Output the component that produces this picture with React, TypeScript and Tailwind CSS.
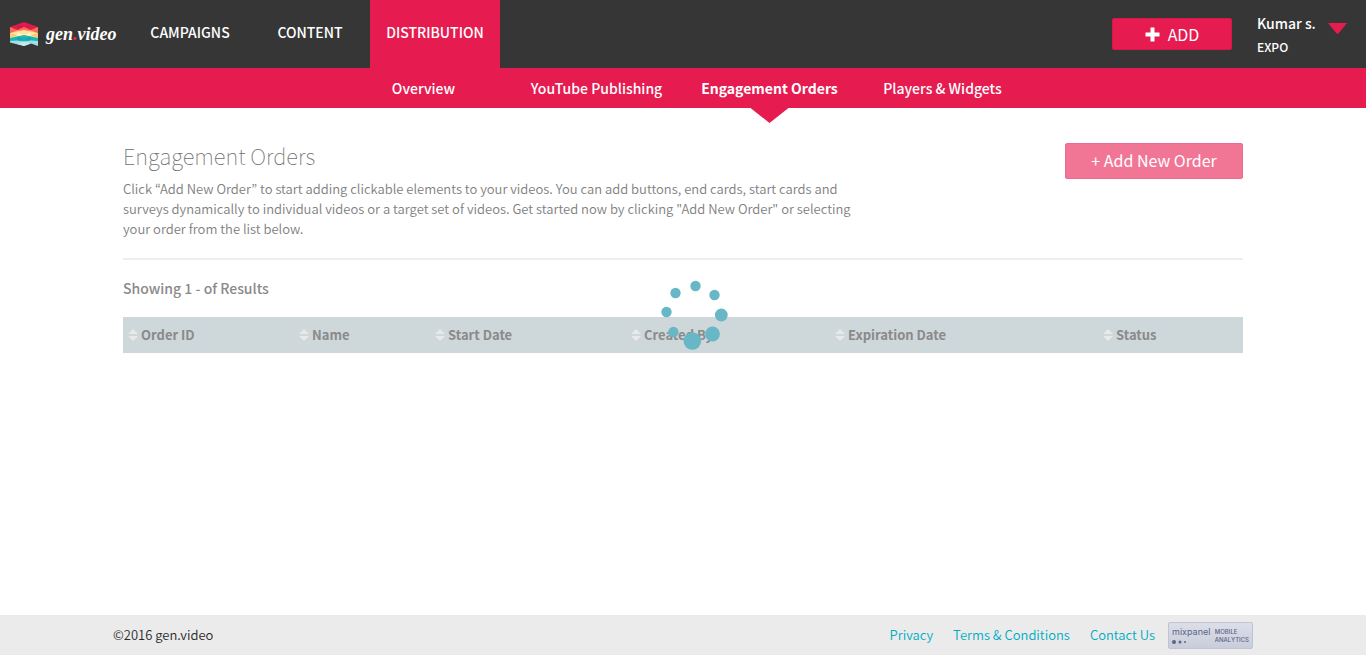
import React from "react";

const logoFacets: [string, string][] = [
  ["14,0 28,5 28,10 14,6 0,10 0,5", "#e6194d"],
  ["0,5 7,8 0,10.5", "#fb6f5c"],
  ["28,5 21,8 28,10.5", "#fb6f5c"],
  ["7,2.5 14,5 7,8", "#c91d4d"],
  ["21,2.5 14,5 21,8", "#d81b4d"],
  ["14,5 21,8 28,10.5 28,12 14,9 0,12 0,10.5 7,8", "#fb6f5c"],
  ["7,8 14,10 0,11", "#fca066"],
  ["21,8 14,10 28,11", "#fca066"],
  ["14,8 28,11 28,17 14,14 0,17 0,11", "#fde39a"],
  ["7,10 14,13 7,15.5", "#fff3c4"],
  ["21,10 14,13 21,15.5", "#fff3c4"],
  ["0,11 7,13.5 0,16", "#fdc878"],
  ["28,11 21,13.5 28,16", "#fdc878"],
  ["14,13 28,16 28,20 14,20 0,20 0,16", "#14b8b4"],
  ["7,14.5 14,17 7,20", "#1e9fb4"],
  ["21,14.5 14,17 21,20", "#1e9fb4"],
  ["0,19 7,18.5 14,19.5 21,18.5 28,19 28,24 21,21.5 14,24 0,20.5", "#a3dde6"],
  ["14,19.5 21,21.5 14,24 7,22", "#c3e9ee"],
];

function Logo() {
  return (
    <a href="#" className="flex w-[130px] items-center gap-2 pl-[10px] text-white">
      <svg width="28" height="24" viewBox="0 0 28 24" aria-hidden="true">
        {logoFacets.map(([points, fill]) => (
          <polygon key={points} points={points} fill={fill} />
        ))}
      </svg>
      <span className="font-['Liberation_Serif',serif] text-[18px] leading-6 font-bold italic">
        gen<span className="text-[#ff1f4f]">.</span>video
      </span>
    </a>
  );
}

const subNav = ["Overview", "YouTube Publishing", "Engagement Orders", "Players & Widgets"];

const columns = [
  { label: "Order ID", width: "w-[171px]" },
  { label: "Name", width: "w-[136px]" },
  { label: "Start Date", width: "w-[196px]" },
  { label: "Created By", width: "w-[204px]" },
  { label: "Expiration Date", width: "w-[268px]" },
  { label: "Status", width: "w-[145px]" },
];

const spinnerDots = [
  { x: 35.5, y: 6, r: 5.2 },
  { x: 54.5, y: 15, r: 5.2 },
  { x: 61.3, y: 35, r: 6.4 },
  { x: 52.5, y: 54, r: 7.4 },
  { x: 32.3, y: 61, r: 8.8 },
  { x: 13.4, y: 52, r: 5.2 },
  { x: 6.5, y: 32, r: 5.2 },
  { x: 15.5, y: 13, r: 5.2 },
];

export default function App() {
  return (
    <div className="flex min-h-screen flex-col bg-white font-['Noto_Sans_CJK_KR','Open_Sans',sans-serif] text-[#8a8a8a]">
      <header>
        <div className="flex h-[68px] items-stretch bg-[#363636]">
          <Logo />
          <nav className="flex text-[14px] leading-6 font-medium text-white">
            <a href="#" className="flex w-[120px] items-center justify-center pb-1">CAMPAIGNS</a>
            <a href="#" className="flex w-[120px] items-center justify-center pb-1">CONTENT</a>
            <a href="#" className="flex w-[130px] items-center justify-center bg-[#e61b4f] pb-1">DISTRIBUTION</a>
          </nav>
          <div className="ml-auto flex items-center pr-[19px]">
            <button className="flex h-8 w-[120px] items-center justify-center gap-2 rounded-xs border border-[#d9164a] bg-[#e61b4f] text-base leading-6 text-white">
              <svg width="15" height="15" viewBox="0 0 15 15" aria-hidden="true">
                <path d="M5.5 0.5h4v5h5v4h-5v5h-4v-5h-5v-4h5z" fill="#fff" />
              </svg>
              ADD
            </button>
            <button className="ml-[25px] flex gap-[10px] pt-[2px] text-left text-white">
              <span className="flex w-[61px] flex-col">
                <span className="text-[14px] leading-6 font-medium">Kumar s.</span>
                <span className="text-[12px] leading-6 font-medium">EXPO</span>
              </span>
              <svg className="mt-3" width="19" height="11" viewBox="0 0 19 11" aria-hidden="true">
                <path d="M0 0H19L10.5 10.5H8.5Z" fill="#e61b4f" />
              </svg>
            </button>
          </div>
        </div>
        <nav className="flex h-10 justify-center bg-[#e61b4f] text-[14px] leading-6 text-white">
          {subNav.map((item) => (
            <a
              key={item}
              href="#"
              className={
                item === "Engagement Orders"
                  ? "relative flex w-[173px] items-center justify-center font-bold"
                  : "flex w-[173px] items-center justify-center font-medium"
              }
            >
              {item}
              {item === "Engagement Orders" && (
                <svg className="absolute top-full left-1/2 -translate-x-1/2" width="39" height="15" viewBox="0 0 39 15" aria-hidden="true">
                  <path d="M0 0H38L19 15Z" fill="#e61b4f" />
                </svg>
              )}
            </a>
          ))}
        </nav>
      </header>

      <main className="relative mx-auto w-full max-w-[1120px] grow pt-[35px]">
        <div className="flex items-start justify-between border-b-2 border-[#eeeeee] pb-[19px]">
          <div className="max-w-[750px]">
            <h1 className="text-[22px] leading-6 font-thin text-[#6e6e6e]">Engagement Orders</h1>
            <p className="mt-3 text-[13px] leading-5 font-[350] text-[#808080]">
              Click “Add New Order” to start adding clickable elements to your videos. You can add buttons, end cards, start cards and{" "}
              <br />
              surveys dynamically to individual videos or a target set of videos. Get started now by clicking "Add New Order" or selecting{" "}
              <br />
              your order from the list below.
            </p>
          </div>
          <button className="h-9 w-[178px] rounded-xs border border-[#ee6a8e] bg-[#f17696] pb-0.5 text-base leading-6 text-white">
            + Add New Order
          </button>
        </div>

        <p className="mt-4 text-[14px] leading-6 font-medium">Showing 1 - of Results</p>

        <table className="mt-[17px] w-full table-fixed bg-[#ced7da] text-left text-[13px] leading-5 font-bold">
          <thead>
            <tr className="h-9">
              {columns.map((c) => (
                <th key={c.label} className={c.width}>
                  <span className="flex items-center gap-[3px] pl-[5px]">
                    <svg width="10" height="12" viewBox="0 0 10 12" aria-hidden="true">
                      <path d="M0 5L5 0L10 5ZM0 7H10L5 12Z" fill="#e9e9e9" />
                    </svg>
                    {c.label}
                  </span>
                </th>
              ))}
            </tr>
          </thead>
        </table>

        <svg role="img" aria-label="Loading" className="absolute top-[172px] left-[537px]" width="70" height="72" viewBox="0 0 70 72">
          {spinnerDots.map((d) => (
            <circle key={`${d.x}-${d.y}`} cx={d.x} cy={d.y} r={d.r} fill="#67b7c6" />
          ))}
        </svg>
      </main>

      <footer className="bg-[#ebebeb] text-[13px] leading-5 font-[350]">
        <div className="mx-auto flex h-10 w-full max-w-[1140px] items-center">
          <span className="text-[#2a2a2a]">©2016 gen.video</span>
          <nav className="ml-auto flex gap-5 text-[#00abc2]">
            <a href="#">Privacy</a>
            <a href="#">Terms &amp; Conditions</a>
            <a href="#">Contact Us</a>
          </nav>
          <a
            href="#"
            className="ml-[13px] flex h-[27px] w-[85px] justify-between rounded-xs border border-[#bfc3d3] bg-linear-to-b from-[#dcdfe9] to-[#c9cddb] px-[3px] pt-1 font-['Inter',sans-serif] text-[#5b6587]"
          >
            <span className="flex flex-col gap-1">
              <span className="text-[9px] leading-[9px] font-normal">mixpanel</span>
              <svg width="16" height="4" viewBox="0 0 16 4" aria-hidden="true">
                <circle cx="2" cy="2" r="2" fill="#5b6587" />
                <circle cx="8" cy="2" r="1.5" fill="#5b6587" />
                <circle cx="13" cy="2" r="1" fill="#5b6587" />
              </svg>
            </span>
            <span className="pt-px text-[6px] leading-[8px] font-medium">
              MOBILE
              <br />
              ANALYTICS
            </span>
          </a>
        </div>
      </footer>
    </div>
  );
}
